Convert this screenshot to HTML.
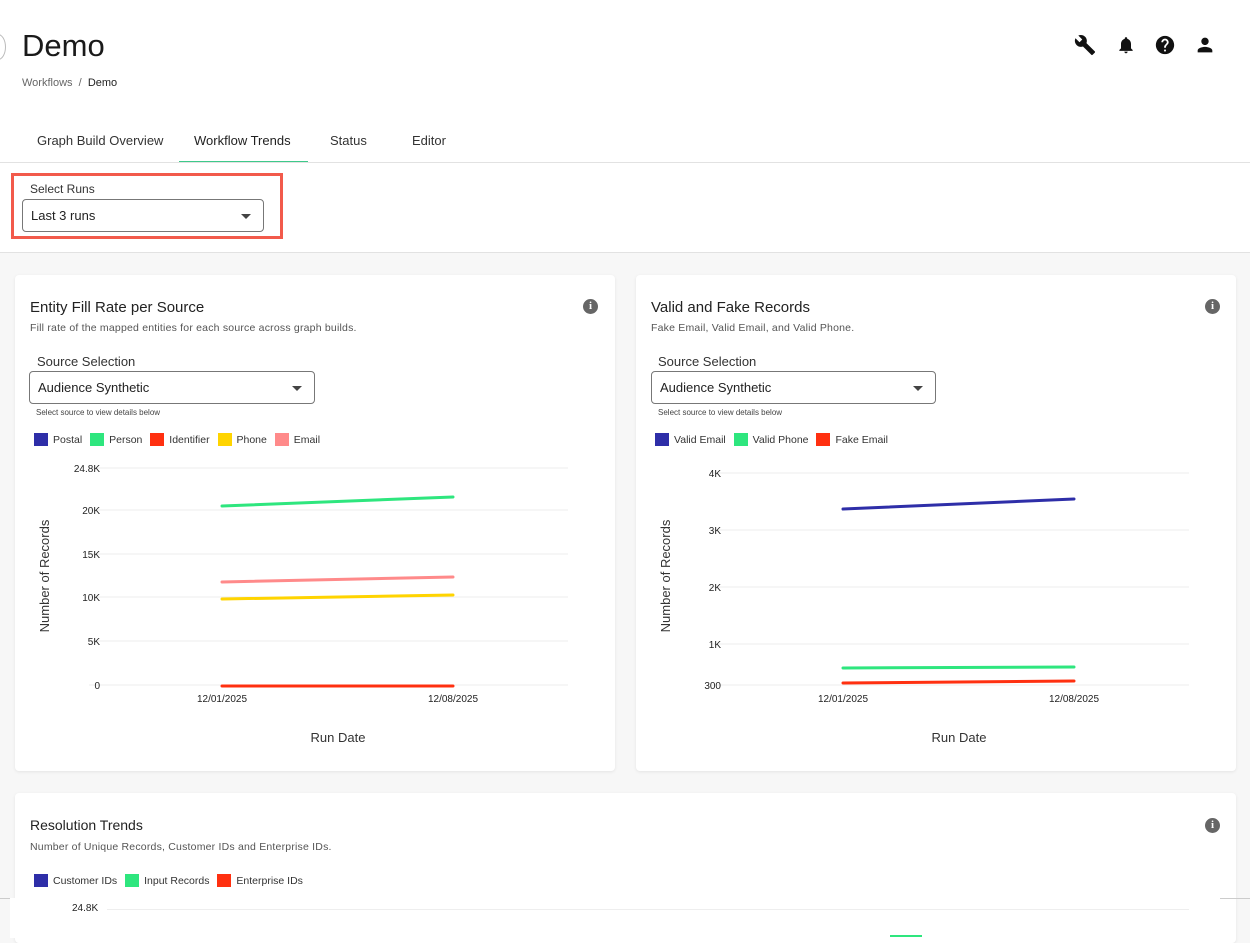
<!DOCTYPE html>
<html><head><meta charset="utf-8"><style>
*{margin:0;padding:0;box-sizing:border-box}
body{width:1250px;height:937px;overflow:hidden;background:#f7f7f7;font-family:"Liberation Sans",sans-serif;color:#222;position:relative}
.a{position:absolute}
.top{left:0;top:0;width:1250px;height:253px;background:#fff;border-bottom:1px solid #e2e2e2}
.card{background:#fff;border-radius:4px;box-shadow:0 1px 3px rgba(0,0,0,.08)}
.t{font-size:15px;color:#222}
.s{font-size:10.5px;color:#555;letter-spacing:.2px}
.sel{border:1px solid #777;border-radius:4px;background:#fff;font-size:13px;padding:0 8px;display:flex;align-items:center}
.car{position:absolute;right:12px;top:14px;border-left:5px solid transparent;border-right:5px solid transparent;border-top:5px solid #444}
.leg{font-size:10.5px;color:#333;display:flex;align-items:center;gap:5px}
.sw{width:14px;height:13px;display:inline-block}
.info{width:15px;height:15px;border-radius:50%;background:#666;color:#fff;font-size:11px;font-weight:bold;text-align:center;line-height:15px;font-family:"Liberation Serif",serif}
</style></head><body>
<div class="a top"></div>
<div class="a" style="left:-10px;top:34px;width:16px;height:26px;border:1px solid #bbb;border-radius:50%"></div>
<div class="a" style="left:22px;top:28px;font-size:31px;color:#1a1a1a">Demo</div>
<div class="a" style="left:22px;top:77px;font-size:11px;color:#666">Workflows &nbsp;/&nbsp; <span style="color:#222">Demo</span></div>
<svg class="a" style="left:1074px;top:34px" width="22" height="22" viewBox="0 0 24 24"><path fill="#111" d="M22.7 19l-9.1-9.1c.9-2.3.4-5-1.5-6.9-2-2-5-2.4-7.4-1.3L9 6 6 9 1.6 4.7C.4 7.1.9 10.1 2.9 12.1c1.9 1.9 4.6 2.4 6.9 1.5l9.1 9.1c.4.4 1 .4 1.4 0l2.3-2.3c.5-.4.5-1.100.1-1.400z"/></svg>
<svg class="a" style="left:1116px;top:35px" width="20" height="20" viewBox="0 0 24 24"><path fill="#111" d="M12 22c1.1 0 2-.9 2-2h-4c0 1.1.9 2 2 2zm6-6v-5c0-3.1-1.6-5.6-4.5-6.3V4c0-.8-.7-1.5-1.5-1.5s-1.5.7-1.5 1.5v.7C7.6 5.4 6 7.9 6 11v5l-2 2v1h16v-1l-2-2z"/></svg>
<svg class="a" style="left:1154px;top:34px" width="22" height="22" viewBox="0 0 24 24"><path fill="#111" d="M12 2C6.5 2 2 6.5 2 12s4.5 10 10 10 10-4.5 10-10S17.5 2 12 2zm1 17h-2v-2h2v2zm2.1-7.8l-.9.9C13.5 12.9 13 13.5 13 15h-2v-.5c0-1.1.5-2.1 1.2-2.8l1.2-1.3c.4-.4.6-.9.6-1.4 0-1.1-.9-2-2-2s-2 .9-2 2H8c0-2.2 1.8-4 4-4s4 1.8 4 4c0 .9-.4 1.7-.9 2.2z"/></svg>
<svg class="a" style="left:1194px;top:34px" width="22" height="22" viewBox="0 0 24 24"><path fill="#111" d="M12 12c2.2 0 4-1.8 4-4s-1.8-4-4-4-4 1.8-4 4 1.8 4 4 4zm0 2c-2.7 0-8 1.3-8 4v2h16v-2c0-2.700-5.300-4-8-4z"/></svg>
<div class="a" style="left:37px;top:133px;font-size:13px;color:#333">Graph Build Overview</div>
<div class="a" style="left:194px;top:133px;font-size:13px;color:#222">Workflow Trends</div>
<div class="a" style="left:330px;top:133px;font-size:13px;color:#333">Status</div>
<div class="a" style="left:412px;top:133px;font-size:13px;color:#333">Editor</div>
<div class="a" style="left:0;top:162px;width:1250px;height:1px;background:#e2e2e2"></div>
<div class="a" style="left:179px;top:161px;width:129px;height:1px;background:#3ec98a"></div>
<div class="a" style="left:11px;top:173px;width:272px;height:66px;border:3px solid #f25a4b"></div>
<div class="a" style="left:30px;top:182px;font-size:12px;color:#333">Select Runs</div>
<div class="a sel" style="left:22px;top:199px;width:242px;height:33px">Last 3 runs<span class="car"></span></div>

<div class="a card" style="left:15px;top:275px;width:600px;height:496px"></div>
<div class="a t" style="left:30px;top:299px">Entity Fill Rate per Source</div>
<div class="a s" style="left:30px;top:322px">Fill rate of the mapped entities for each source across graph builds.</div>
<div class="a info" style="left:583px;top:299px">i</div>
<div class="a" style="left:37px;top:354px;font-size:13px;color:#333">Source Selection</div>
<div class="a sel" style="left:29px;top:371px;width:286px;height:33px">Audience Synthetic<span class="car"></span></div>
<div class="a" style="left:36px;top:408px;font-size:8px;color:#444">Select source to view details below</div>
<div class="a leg" style="left:34px;top:433px"><span class="sw" style="background:#2e2ea8"></span>Postal&nbsp;<span class="sw" style="background:#2ee67e"></span>Person&nbsp;<span class="sw" style="background:#ff3010"></span>Identifier&nbsp;<span class="sw" style="background:#ffd400"></span>Phone&nbsp;<span class="sw" style="background:#ff8a8a"></span>Email</div>
<svg class="a" style="left:0;top:450px" width="615" height="310" font-family="Liberation Sans" font-size="10" fill="#222">
<g stroke="#eee"><line x1="89" x2="568" y1="18" y2="18"/><line x1="89" x2="568" y1="60" y2="60"/><line x1="89" x2="568" y1="104" y2="104"/><line x1="89" x2="568" y1="147" y2="147"/><line x1="89" x2="568" y1="191" y2="191"/><line x1="89" x2="568" y1="235" y2="235"/></g>
<g text-anchor="end"><text x="100" y="22">24.8K</text><text x="100" y="64">20K</text><text x="100" y="108">15K</text><text x="100" y="151">10K</text><text x="100" y="195">5K</text><text x="100" y="239">0</text></g>
<text x="222" y="252" text-anchor="middle">12/01/2025</text><text x="453" y="252" text-anchor="middle">12/08/2025</text>
<text x="338" y="292" text-anchor="middle" font-size="13" fill="#333">Run Date</text>
<text transform="translate(49,126) rotate(-90)" text-anchor="middle" font-size="13" fill="#333">Number of Records</text>
<g stroke-width="3" stroke-linecap="round"><line x1="222" y1="56" x2="453" y2="47" stroke="#2ee67e"/><line x1="222" y1="132" x2="453" y2="127" stroke="#ff8a8a"/><line x1="222" y1="149" x2="453" y2="145" stroke="#ffd400"/><line x1="222" y1="236" x2="453" y2="236" stroke="#ff3010"/></g>
</svg>

<div class="a card" style="left:636px;top:275px;width:600px;height:496px"></div>
<div class="a t" style="left:651px;top:299px">Valid and Fake Records</div>
<div class="a s" style="left:651px;top:322px">Fake Email, Valid Email, and Valid Phone.</div>
<div class="a info" style="left:1205px;top:299px">i</div>
<div class="a" style="left:658px;top:354px;font-size:13px;color:#333">Source Selection</div>
<div class="a sel" style="left:651px;top:371px;width:285px;height:33px">Audience Synthetic<span class="car"></span></div>
<div class="a" style="left:658px;top:408px;font-size:8px;color:#444">Select source to view details below</div>
<div class="a leg" style="left:655px;top:433px"><span class="sw" style="background:#2e2ea8"></span>Valid Email&nbsp;<span class="sw" style="background:#2ee67e"></span>Valid Phone&nbsp;<span class="sw" style="background:#ff3010"></span>Fake Email</div>
<svg class="a" style="left:621px;top:450px" width="615" height="310" font-family="Liberation Sans" font-size="10" fill="#222">
<g stroke="#eee"><line x1="89" x2="568" y1="23" y2="23"/><line x1="89" x2="568" y1="80" y2="80"/><line x1="89" x2="568" y1="137" y2="137"/><line x1="89" x2="568" y1="194" y2="194"/><line x1="89" x2="568" y1="235" y2="235"/></g>
<g text-anchor="end"><text x="100" y="27">4K</text><text x="100" y="84">3K</text><text x="100" y="141">2K</text><text x="100" y="198">1K</text><text x="100" y="239">300</text></g>
<text x="222" y="252" text-anchor="middle">12/01/2025</text><text x="453" y="252" text-anchor="middle">12/08/2025</text>
<text x="338" y="292" text-anchor="middle" font-size="13" fill="#333">Run Date</text>
<text transform="translate(49,126) rotate(-90)" text-anchor="middle" font-size="13" fill="#333">Number of Records</text>
<g stroke-width="3" stroke-linecap="round"><line x1="222" y1="59" x2="453" y2="49" stroke="#2e2ea8"/><line x1="222" y1="218" x2="453" y2="217" stroke="#2ee67e"/><line x1="222" y1="233" x2="453" y2="231" stroke="#ff3010"/></g>
</svg>

<div class="a card" style="left:15px;top:793px;width:1221px;height:150px"></div>
<div class="a t" style="left:30px;top:817px;font-size:14px">Resolution Trends</div>
<div class="a s" style="left:30px;top:841px">Number of Unique Records, Customer IDs and Enterprise IDs.</div>
<div class="a info" style="left:1205px;top:818px">i</div>
<div class="a leg" style="left:34px;top:874px"><span class="sw" style="background:#2e2ea8"></span>Customer IDs&nbsp;<span class="sw" style="background:#2ee67e"></span>Input Records&nbsp;<span class="sw" style="background:#ff3010"></span>Enterprise IDs</div>
<div class="a" style="left:0;top:898px;width:10px;height:1px;background:#ccc"></div>
<div class="a" style="left:1220px;top:898px;width:30px;height:1px;background:#ccc"></div>
<div class="a" style="left:10px;top:898px;width:1210px;height:40px;background:#fff"></div>
<div class="a" style="left:72px;top:903px;font-size:10px">24.8K</div>
<div class="a" style="left:107px;top:909px;width:1082px;height:1px;background:#eee"></div>
<div class="a" style="left:890px;top:935px;width:32px;height:2px;background:#2ee67e"></div>
</body></html>
